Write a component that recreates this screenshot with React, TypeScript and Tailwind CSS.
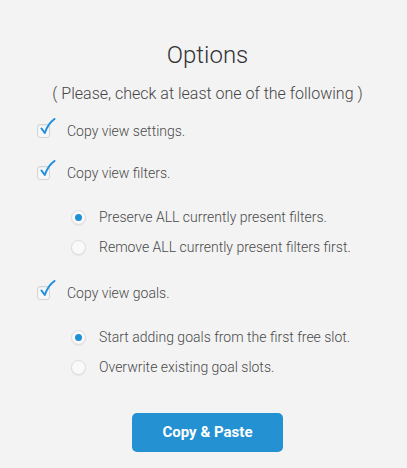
import { useState } from "react";

function Check({ checked, onClick }: { checked: boolean; onClick: () => void }) {
  return (
    <button onClick={onClick} className="relative w-[13px] h-[14px] shrink-0 rounded-[3px] border border-[#d4d4d4] bg-[#f7f7f7] shadow-[inset_0_1px_1px_rgba(0,0,0,0.06)]">
      {checked && (
        <svg className="absolute left-[1px] top-[-7px]" width="17" height="18" viewBox="0 0 17 18">
          <path d="M2.5 10.5 L5.8 15 C7.6 9.5 10.5 4.5 15.5 1" fill="none" stroke="#1e8fdc" strokeWidth="2" strokeLinecap="round" strokeLinejoin="round" />
        </svg>
      )}
    </button>
  );
}

function Radio({ checked, onClick }: { checked: boolean; onClick: () => void }) {
  return (
    <button onClick={onClick} className="flex items-center justify-center w-[15px] h-[15px] shrink-0 rounded-full border border-[#dcdcdc] bg-[#f9f9f9] shadow-[0_1px_1px_rgba(0,0,0,0.05)]">
      {checked && <span className="block w-[7px] h-[7px] rounded-full bg-[#2090d6]" />}
    </button>
  );
}

export default function App() {
  const [settings, setSettings] = useState(true);
  const [filters, setFilters] = useState(true);
  const [goals, setGoals] = useState(true);
  const [filterMode, setFilterMode] = useState(0);
  const [goalMode, setGoalMode] = useState(0);

  return (
    <div className="w-[407px] h-[468px] bg-[#f3f3f3] font-['Roboto',sans-serif] font-light text-[#4a4a4a] flex flex-col">
      <h1 className="mt-[40px] pl-[8px] text-center text-[24px] leading-[30px] text-[#333] font-light">Options</h1>
      <p className="mt-[14px] pl-[8px] text-center text-[16px] leading-[20px] text-[#444]">( Please, check at least one of the following )</p>

      <div className="mt-[18px] pl-[37px] flex flex-col text-[14px]">
        <label className="flex items-center gap-[17px] h-[18px]">
          <Check checked={settings} onClick={() => setSettings(!settings)} />
          <span>Copy view settings.</span>
        </label>
        <label className="mt-[24px] flex items-center gap-[17px] h-[18px]">
          <Check checked={filters} onClick={() => setFilters(!filters)} />
          <span>Copy view filters.</span>
        </label>

        <div className="mt-[26px] pl-[34px] flex flex-col gap-[12px]">
          {["Preserve ALL currently present filters.", "Remove ALL currently present filters first."].map((t, i) => (
            <label key={t} className="flex items-center gap-[13px] h-[18px]">
              <Radio checked={filterMode === i} onClick={() => setFilterMode(i)} />
              <span>{t}</span>
            </label>
          ))}
        </div>

        <label className="mt-[28px] flex items-center gap-[17px] h-[18px]">
          <Check checked={goals} onClick={() => setGoals(!goals)} />
          <span>Copy view goals.</span>
        </label>

        <div className="mt-[26px] pl-[34px] flex flex-col gap-[12px]">
          {["Start adding goals from the first free slot.", "Overwrite existing goal slots."].map((t, i) => (
            <label key={t} className="flex items-center gap-[13px] h-[18px]">
              <Radio checked={goalMode === i} onClick={() => setGoalMode(i)} />
              <span>{t}</span>
            </label>
          ))}
        </div>
      </div>

      <div className="mt-[37px] pl-[8px] flex justify-center">
        <button className="w-[151px] h-[39px] rounded-[5px] bg-[#2492d2] text-white text-[15px] font-bold">Copy &amp; Paste</button>
      </div>
    </div>
  );
}
